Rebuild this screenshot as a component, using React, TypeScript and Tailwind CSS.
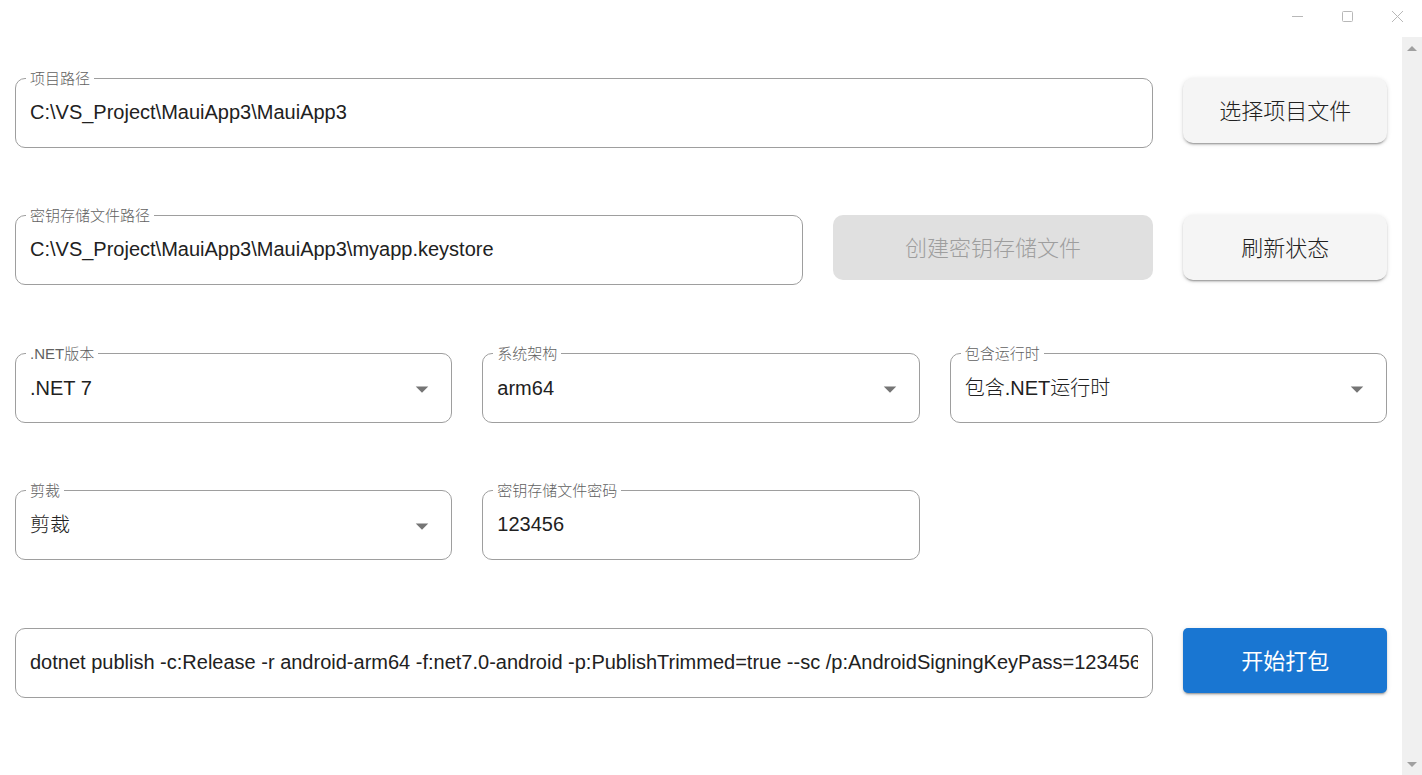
import { useId, useState } from "react";
import type { ReactNode } from "react";
import clsx from "clsx";

function FieldFrame({ id, label, className, children }: { id: string; label?: string; className: string; children: ReactNode }) {
  return (
    <div className={clsx("relative h-[70px] rounded-[10px] border border-[#9e9e9e]", className)}>
      {label && (
        <label
          htmlFor={id}
          className="absolute -top-[10px] left-[10px] bg-white px-1 text-[15px] leading-5 font-light text-[#616161]"
        >
          {label}
        </label>
      )}
      {children}
    </div>
  );
}

function TextField({ label, name, initial, className }: { label?: string; name?: string; initial: string; className: string }) {
  const id = useId();
  const [value, setValue] = useState(initial);
  return (
    <FieldFrame id={id} label={label} className={className}>
      <div className="flex h-full px-[14px] pb-[2px]">
        <input
          id={id}
          type="text"
          aria-label={name}
          value={value}
          onChange={(e) => setValue(e.target.value)}
          className="w-full min-w-0 bg-transparent outline-none"
        />
      </div>
    </FieldFrame>
  );
}

function SelectField({ label, options, className }: { label: string; options: string[]; className: string }) {
  const id = useId();
  return (
    <FieldFrame id={id} label={label} className={className}>
      <select id={id} className="h-full w-full appearance-none bg-transparent px-[14px] font-light outline-none">
        {options.map((option) => (
          <option key={option}>{option}</option>
        ))}
      </select>
      <svg
        viewBox="0 0 24 24"
        aria-hidden="true"
        className="pointer-events-none absolute top-5 right-[14px] size-[30px] fill-[#757575]"
      >
        <path d="M7 10l5 5 5-5z" />
      </svg>
    </FieldFrame>
  );
}

const raised =
  "shadow-[0_3px_1px_-2px_rgba(0,0,0,0.2),0_2px_2px_0_rgba(0,0,0,0.14),0_1px_5px_0_rgba(0,0,0,0.12)]";

function ActionButton({ className, disabled, children }: { className: string; disabled?: boolean; children: ReactNode }) {
  return (
    <button
      type="button"
      disabled={disabled}
      className={clsx("h-[65px] pt-[2px] text-[22px] whitespace-nowrap", className)}
    >
      {children}
    </button>
  );
}

function WindowButton({ name, children }: { name: string; children: ReactNode }) {
  return (
    <button type="button" aria-label={name} className="flex h-[33px] w-[50px] items-center justify-center">
      <svg viewBox="0 0 13 13" className="size-[13px] fill-none stroke-[#b8b8b8]" strokeWidth="1">
        {children}
      </svg>
    </button>
  );
}

export default function App() {
  return (
    <div className="flex h-screen flex-col bg-white font-['Liberation_Sans','Noto_Sans_CJK_SC',sans-serif] text-[20px] text-[#212121]">
      <header className="flex h-[37px] shrink-0 justify-end">
        <WindowButton name="最小化">
          <path d="M1 6.5h11" />
        </WindowButton>
        <WindowButton name="最大化">
          <rect x="1.5" y="1.5" width="10" height="10" rx="1" />
        </WindowButton>
        <WindowButton name="关闭">
          <path d="M1 1l11 11M12 1L1 12" />
        </WindowButton>
      </header>
      <div className="flex min-h-0 flex-1">
        <main className="flex min-w-0 flex-1 flex-col gap-[68px] overflow-hidden px-[15px] pt-[41px]">
          <section className="grid grid-cols-12 gap-x-[30px] gap-y-[67px]">
            <TextField label="项目路径" initial="C:\VS_Project\MauiApp3\MauiApp3" className="col-span-10" />
            <ActionButton className={clsx("col-span-2 rounded-[10px] bg-[#f5f5f5] font-light", raised)}>
              选择项目文件
            </ActionButton>
            <TextField
              label="密钥存储文件路径"
              initial="C:\VS_Project\MauiApp3\MauiApp3\myapp.keystore"
              className="col-span-7"
            />
            <ActionButton disabled className="col-span-3 rounded-[10px] bg-[#e0e0e0] font-light text-[#9e9e9e]">
              创建密钥存储文件
            </ActionButton>
            <ActionButton className={clsx("col-span-2 rounded-[10px] bg-[#f5f5f5] font-light", raised)}>
              刷新状态
            </ActionButton>
          </section>
          <section className="grid grid-cols-12 gap-x-[30px] gap-y-[67px]">
            <SelectField label=".NET版本" options={[".NET 7"]} className="col-span-4" />
            <SelectField label="系统架构" options={["arm64"]} className="col-span-4" />
            <SelectField label="包含运行时" options={["包含.NET运行时"]} className="col-span-4" />
            <SelectField label="剪裁" options={["剪裁"]} className="col-span-4" />
            <TextField label="密钥存储文件密码" initial="123456" className="col-span-4" />
          </section>
          <section className="grid grid-cols-12 gap-x-[30px]">
            <TextField
              name="打包命令"
              initial="dotnet publish -c:Release -r android-arm64 -f:net7.0-android -p:PublishTrimmed=true --sc /p:AndroidSigningKeyPass=123456"
              className="col-span-10"
            />
            <ActionButton className={clsx("col-span-2 rounded-[5px] bg-[#1976d2] text-white", raised)}>
              开始打包
            </ActionButton>
          </section>
        </main>
        <div aria-hidden="true" className="flex w-5 shrink-0 flex-col items-center justify-between bg-[#f0f0f0] pt-[9px] pb-2">
          <svg viewBox="0 0 10 5" className="h-[5px] w-[10px] fill-[#a0a0a0]">
            <path d="M0 5L5 0L10 5z" />
          </svg>
          <svg viewBox="0 0 10 5" className="h-[5px] w-[10px] fill-[#a0a0a0]">
            <path d="M0 0L5 5L10 0z" />
          </svg>
        </div>
      </div>
    </div>
  );
}
